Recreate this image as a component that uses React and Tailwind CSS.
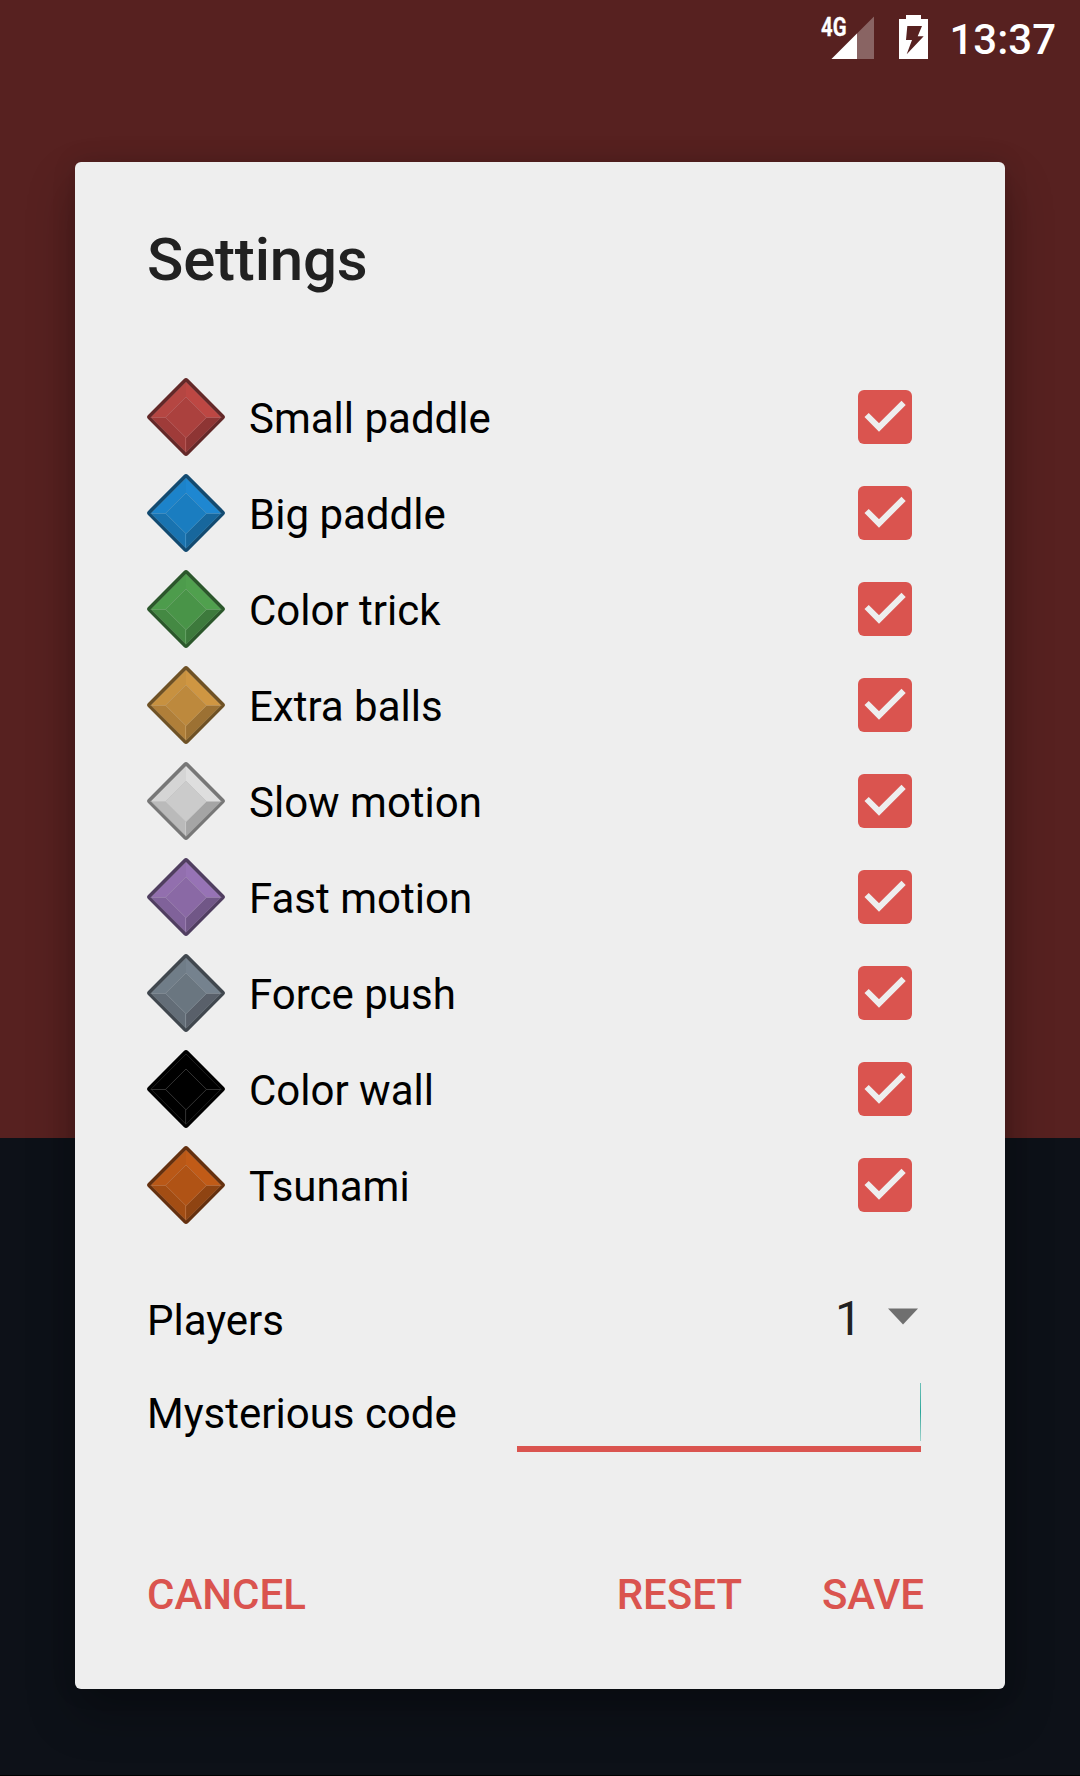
const POWER_UPS = [
  { label: "Small paddle", edge: "#632828", face: "#ab413e", tl: "#b54642", tr: "#bd4743", bl: "#9f3b39", br: "#8e3534", line: "#c8716f" },
  { label: "Big paddle", edge: "#124a70", face: "#1a7dc0", tl: "#1c83ca", tr: "#1e87d1", bl: "#1973b0", br: "#17679d", line: "#5aa2d2" },
  { label: "Color trick", edge: "#2b572b", face: "#499448", tl: "#4d9c4c", tr: "#50a04e", bl: "#448943", br: "#3d7a3c", line: "#7db37c" },
  { label: "Extra balls", edge: "#6e5125", face: "#bd893d", tl: "#c79140", tr: "#cf9642", bl: "#b07f39", br: "#9c7133", line: "#d0aa70" },
  { label: "Slow motion", edge: "#777777", face: "#cbcbcb", tl: "#d5d5d5", tr: "#dedede", bl: "#bababa", br: "#a5a5a5", line: "#d2d2d2" },
  { label: "Fast motion", edge: "#503e60", face: "#8a69a5", tl: "#926fae", tr: "#9773b5", bl: "#80629a", br: "#715787", line: "#ad95c0" },
  { label: "Force push", edge: "#40474e", face: "#6a7680", tl: "#707d88", tr: "#75828e", bl: "#636d77", br: "#59606a", line: "#969fa7" },
  { label: "Color wall", edge: "#000000", face: "#000000", tl: "#000000", tr: "#000000", bl: "#000000", br: "#000000", line: "#555555" },
  { label: "Tsunami", edge: "#64300f", face: "#b05315", tl: "#b95817", tr: "#c15b17", bl: "#a34d13", br: "#8f4412", line: "#c98355" },
];

function Gem({ c }) {
  return (
    <svg width="78" height="78" viewBox="0 0 78 78" className="shrink-0">
      <path d="M39 3.2 74.8 39 39 74.8 3.2 39Z" fill={c.edge} stroke={c.edge} strokeWidth="6" strokeLinejoin="round" />
      <path d="M39 4V19L18.5 39.4H3.6Z" fill={c.tl} />
      <path d="M39 4V19L59.5 39.4H74.4Z" fill={c.tr} />
      <path d="M39 74.4V59.8L18.5 39.4H3.6Z" fill={c.bl} />
      <path d="M39 74.4V59.8L59.5 39.4H74.4Z" fill={c.br} />
      <path d="M39 19 59.5 39.4 39 59.8 18.5 39.4Z" fill={c.face} />
      <path
        d="M39 19 59.5 39.4 39 59.8 18.5 39.4ZM3.6 39.5H18.5M59.5 39.5H74.4M38.6 59.8V74.4"
        fill="none"
        stroke={c.line}
        strokeWidth="0.8"
        strokeOpacity="0.75"
      />
      <path d="M39 3.6 74.4 39.2 39 74.6 3.6 39.2Z" fill="none" stroke={c.edge} strokeWidth="1" />
      <path d="M39 4 74 39.2 39 74.2 4 39.2Z" fill="none" stroke={c.line} strokeWidth="0.6" strokeOpacity="0.6" />
    </svg>
  );
}

function Checkbox() {
  return (
    <svg width="54" height="54" viewBox="0 0 54 54" className="shrink-0">
      <rect width="54" height="54" rx="6" fill="#da544f" />
      <path d="M8.6 25 21 37.4 45.6 12.8" fill="none" stroke="#eee" strokeWidth="6" />
    </svg>
  );
}

function StatusBar() {
  return (
    <div className="flex h-[72px] items-start justify-end pr-[24px] text-white">
      <svg width="56" height="60" viewBox="0 0 56 60" className="mr-[23px]">
        <path d="M54 16.5V59H11.5Z" fill="#fff" fillOpacity="0.3" />
        <path d="M37 33.5V59H11.5Z" fill="#fff" />
        <text
          x="1"
          y="35.5"
          textLength="25.5"
          lengthAdjust="spacingAndGlyphs"
          fill="#fff"
          stroke="#fff"
          strokeWidth="0.3"
          className="font-[Roboto] text-[26px] font-bold"
        >
          4G
        </text>
      </svg>
      <svg width="29" height="60" viewBox="0 0 29 60" className="mr-[21px]">
        <path d="M7 15H22V19H29V59H0V19H7ZM8.3 26 7 40H13L7.7 54.3 24.7 36.3H18.7L23 26Z" fill="#fff" fillRule="evenodd" />
      </svg>
      <span className="mt-[15px] text-[42px] leading-[50px] font-medium">13:37</span>
    </div>
  );
}

export default function App() {
  return (
    <div className="h-[1776px] w-[1080px] overflow-hidden border-b border-black bg-[linear-gradient(to_bottom,#572120_1138px,#0d1118_1138px)] font-[Roboto,sans-serif]">
      <StatusBar />
      <main className="mx-[75px] mt-[90px] flex h-[1527px] flex-col rounded-[6px] bg-[#eeeeee] px-[72px] text-[42px] text-black shadow-[0_24px_48px_rgba(0,0,0,0.28),0_0_24px_rgba(0,0,0,0.12)]">
        <h1 className="mt-[58px] text-[60px] leading-[80px] font-medium tracking-[-0.2px] text-[#212121]">Settings</h1>
        <ul className="mt-[69px]">
          {POWER_UPS.map((p) => (
            <li key={p.label} className="flex h-[96px] items-center pr-[21px]">
              <Gem c={p} />
              <span className="ml-[24px] flex-1 pt-[3px] leading-[50px]">{p.label}</span>
              <Checkbox />
            </li>
          ))}
        </ul>
        <div className="mt-[41px] flex h-[93px] items-center">
          <span className="flex-1">Players</span>
          <span className="mr-[26px] -mt-[4px] text-[48px] leading-[60px] text-[#212121]">1</span>
          <svg width="30" height="17" viewBox="0 0 30 17" className="mr-[15px] -mt-[8px]">
            <path d="M0 .5H30L15 16.5Z" fill="#6f6f6f" />
          </svg>
        </div>
        <div className="flex h-[93px] items-center">
          <span className="flex-1">Mysterious code</span>
          <div className="mt-[7px] mr-[12px] flex h-[69px] w-[404px] items-start justify-end border-b-[6px] border-[#da544f]">
            <div className="h-[58px] w-px bg-linear-to-b from-[#6cc0b8] via-[#26a69a] to-[#9dd3cd]" />
          </div>
        </div>
        <div className="mt-[110px] flex h-[50px] items-center pr-[9px] leading-[50px] font-medium text-[#da544f]">
          <button className="mr-auto">CANCEL</button>
          <button>RESET</button>
          <button className="ml-[80px] tracking-[-0.1px]">SAVE</button>
        </div>
      </main>
    </div>
  );
}
